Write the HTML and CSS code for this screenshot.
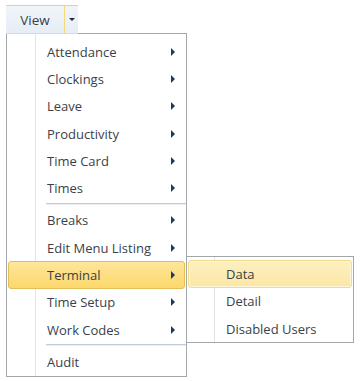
FILE: index.html
```html
<!DOCTYPE html>
<html lang="en">
<head>
    <meta charset="UTF-8">
    <title>View Menu</title>
    <link rel="stylesheet" href="styles.css">
</head>
<body>
    <div class="toolbar">
        <div class="split-btn">
            <span class="split-btn-label">View</span>
            <span class="split-btn-drop"><span class="drop-arrow"></span></span>
        </div>
    </div>
    <div class="menu">
        <ul class="menu-list">
            <li class="menu-item has-sub">Attendance</li>
            <li class="menu-item has-sub">Clockings</li>
            <li class="menu-item has-sub">Leave</li>
            <li class="menu-item has-sub">Productivity</li>
            <li class="menu-item has-sub">Time Card</li>
            <li class="menu-item has-sub">Times</li>
            <li class="menu-sep"></li>
            <li class="menu-item has-sub">Breaks</li>
            <li class="menu-item has-sub">Edit Menu Listing</li>
            <li class="menu-item has-sub active">Terminal
                <ul class="submenu">
                    <li class="menu-item hover">Data</li>
                    <li class="menu-item">Detail</li>
                    <li class="menu-item">Disabled Users</li>
                </ul>
            </li>
            <li class="menu-item has-sub">Time Setup</li>
            <li class="menu-item has-sub">Work Codes</li>
            <li class="menu-sep"></li>
            <li class="menu-item">Audit</li>
        </ul>
    </div>
</body>
</html>
```

FILE: styles.css
```css
:root {
    --text-color: #3a3f4a;
    --menu-border: #a3a6ab;
    --gutter-line: #e2e3e5;
    --arrow-color: #1f3a5f;
    --row-height: 27.3px;
}

body {
    margin: 0;
    background: #fff;
    font-family: 'Open Sans', 'Liberation Sans', sans-serif;
    font-size: 13px;
    color: var(--text-color);
}

.toolbar {
    padding: 5px 0 0 6px;
}

/* split button */
.split-btn {
    display: inline-flex;
    position: relative;
    z-index: 2;
    height: 27px;
    width: 72px;
    box-sizing: content-box;
    border-top: 1px solid #c7d2df;
    border-bottom: 1px solid #f7dc7c;
    background: linear-gradient(#f1f5fa, #e6edf6);
}

.split-btn-label {
    flex: 1;
    display: flex;
    align-items: center;
    justify-content: center;
    font-size: 13.5px;
    border-right: 1px solid #f5d878;
}

.split-btn-drop {
    width: 13px;
    display: flex;
    align-items: center;
    justify-content: center;
}

.drop-arrow {
    width: 0;
    height: 0;
    border-left: 3px solid transparent;
    border-right: 3px solid transparent;
    border-top: 3px solid #1c2a3c;
}

/* dropdown menu */
.menu {
    margin: -1px 0 0 6px;
    width: 179px;
    border: 1px solid var(--menu-border);
    background: linear-gradient(to right, #fff 28px, var(--gutter-line) 28px, var(--gutter-line) 29px, #fff 29px);
}

.menu-list,
.submenu {
    list-style: none;
    margin: 0;
    padding: 4px 0 0;
}

.menu-item {
    position: relative;
    display: flex;
    align-items: center;
    justify-content: space-between;
    height: var(--row-height);
    box-sizing: border-box;
    margin: 0 1px;
    padding: 0 9px 0 38px;
    border: 1px solid transparent;
    border-radius: 3px;
    white-space: nowrap;
}

.menu-item.has-sub::after {
    content: "";
    width: 0;
    height: 0;
    border-left: 4px solid var(--arrow-color);
    border-top: 4px solid transparent;
    border-bottom: 4px solid transparent;
}

.menu-item.active {
    background: linear-gradient(#fee699, #fcd86c);
    border-color: #e3bd5a;
}

.menu-sep {
    margin: 1px 0 2px 39px;
    border-top: 1px solid #c3cbd8;
    border-bottom: 1px solid #eceef2;
}

/* submenu */
.submenu {
    position: absolute;
    top: -6px;
    left: 177px;
    width: 166px;
    padding-top: 3px;
    border: 1px solid var(--menu-border);
    background: linear-gradient(to right, #fff 27px, var(--gutter-line) 27px, var(--gutter-line) 28px, #fff 28px);
    z-index: 3;
}

.submenu .menu-item {
    padding-left: 37px;
}

.submenu .menu-item.hover {
    background: linear-gradient(#fdf0c0, #fbe7a6);
    border-color: #f3d98a;
    box-shadow: inset 0 0 0 1px #fff6d8;
}
```
